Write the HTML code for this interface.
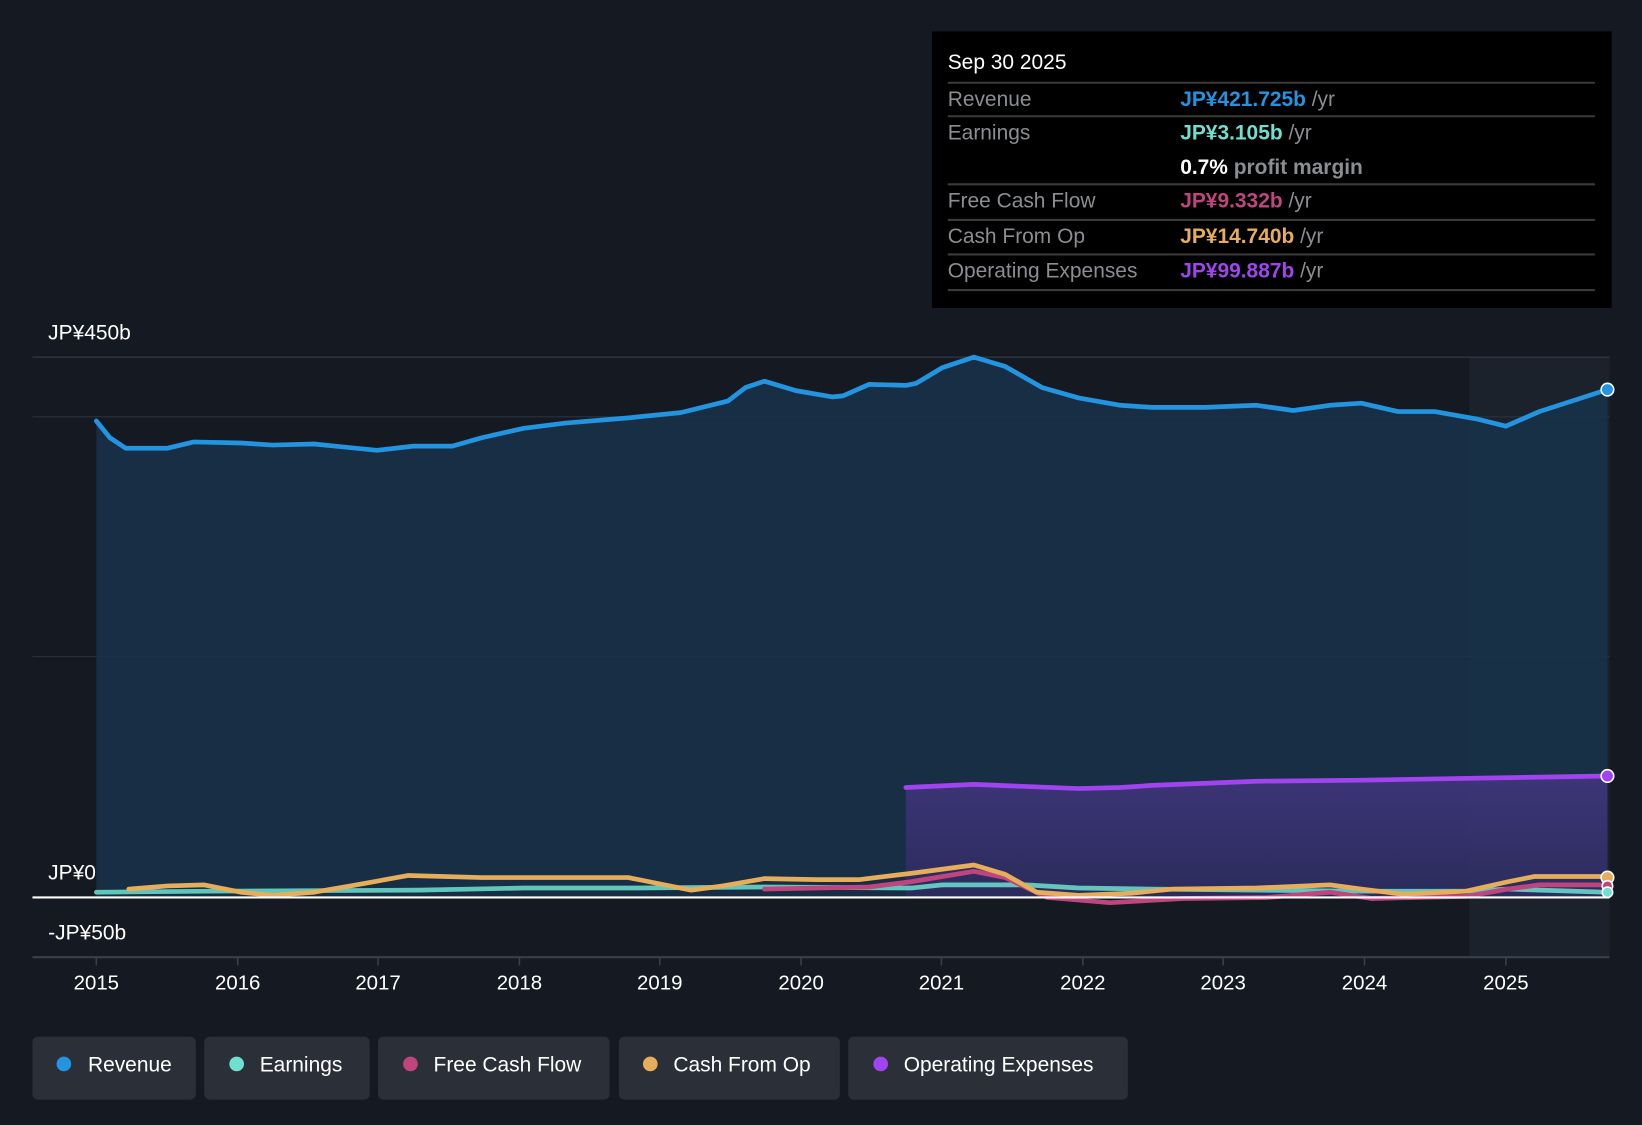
<!DOCTYPE html>
<html><head><meta charset="utf-8">
<style>
html,body{margin:0;padding:0;background:#151a22;}
body{width:1642px;height:1120px;overflow:hidden;font-family:"Liberation Sans",sans-serif;}
svg text{font-family:"Liberation Sans",sans-serif;}
</style></head><body>
<svg width="1642" height="1120" viewBox="0 0 1568 1069.5" xmlns="http://www.w3.org/2000/svg">
<defs>
<linearGradient id="op" x1="0" y1="0" x2="0" y2="1">
<stop offset="0" stop-color="#5b3aa0" stop-opacity="0.55"/>
<stop offset="1" stop-color="#3a2a70" stop-opacity="0.55"/>
</linearGradient>
</defs>
<rect width="1568" height="1070" fill="#151a22"/>
<rect x="31" y="341" width="1506" height="573" fill="#141922"/>
<rect x="1403" y="341" width="134" height="573" fill="#1b222c"/>
<line x1="31" y1="341" x2="1537" y2="341" stroke="#3a404a" stroke-width="1"/>
<line x1="31" y1="398" x2="1537" y2="398" stroke="#2a3240" stroke-width="1"/>
<line x1="31" y1="627" x2="1537" y2="627" stroke="#2a3240" stroke-width="1"/>
<path d="M92,402 L105,418 L120,428 L160,428 L185,422 L230,423 L260,425 L300,424 L330,427 L360,430 L395,426 L432,426 L460,418 L500,409 L540,404 L600,399 L650,394 L695,383 L712,370 L730,364 L760,373 L795,379 L805,378 L830,367 L865,368 L875,366 L900,351 L930,341 L960,350 L995,370 L1030,380 L1070,387 L1100,389 L1150,389 L1200,387 L1235,392 L1270,387 L1300,385 L1335,393 L1370,393 L1410,400 L1438,407 L1470,393 L1535,372 L1535,857 L92,857 Z" fill="#17324a" fill-opacity="0.85"/>
<path d="M865,752 L930,749 L1030,753 L1070,752 L1100,750 L1200,746 L1300,745 L1535,741 L1535,857 L865,857 Z" fill="url(#op)"/>
<g fill="none" stroke-width="4.5" stroke-linejoin="round" stroke-linecap="round">
<path d="M92,402 L105,418 L120,428 L160,428 L185,422 L230,423 L260,425 L300,424 L330,427 L360,430 L395,426 L432,426 L460,418 L500,409 L540,404 L600,399 L650,394 L695,383 L712,370 L730,364 L760,373 L795,379 L805,378 L830,367 L865,368 L875,366 L900,351 L930,341 L960,350 L995,370 L1030,380 L1070,387 L1100,389 L1150,389 L1200,387 L1235,392 L1270,387 L1300,385 L1335,393 L1370,393 L1410,400 L1438,407 L1470,393 L1535,372" stroke="#2394df"/>
<path d="M865,752 L930,749 L1030,753 L1070,752 L1100,750 L1200,746 L1300,745 L1535,741" stroke="#a044f0"/>
<path d="M92,852 L200,851 L400,850 L500,848 L600,848 L730,847 L870,848 L900,845 L980,845 L1030,848 L1100,849 L1200,850 L1300,851 L1400,851 L1440,849 L1535,852" stroke="#6fe0cf" stroke-opacity="0.85"/>
<path d="M730,849 L830,847 L870,842 L930,832 L960,838 L1000,857 L1060,862 L1130,858 L1210,857 L1270,852 L1310,858 L1400,856 L1440,849 L1470,845 L1535,845" stroke="#c0457f"/>
<path d="M123,849 L160,846 L195,845 L230,852 L260,855 L300,852 L340,845 L390,836 L460,838 L600,838 L620,842 L660,850 L690,846 L730,839 L780,840 L820,840 L870,834 L930,826 L960,835 L990,852 L1030,855 L1080,853 L1120,849 L1200,848 L1270,845 L1300,849 L1340,854 L1400,851 L1440,842 L1465,837 L1535,837" stroke="#e6ad5a"/>
</g>
<line x1="31" y1="857" x2="1537" y2="857" stroke="#ffffff" stroke-width="2"/>
<line x1="31" y1="914" x2="1537" y2="914" stroke="#3a404a" stroke-width="2"/>
<g stroke="#3a404a" stroke-width="1.5">
<line x1="92" y1="914" x2="92" y2="922"/><line x1="227" y1="914" x2="227" y2="922"/><line x1="361" y1="914" x2="361" y2="922"/><line x1="496" y1="914" x2="496" y2="922"/><line x1="630" y1="914" x2="630" y2="922"/><line x1="765" y1="914" x2="765" y2="922"/><line x1="899" y1="914" x2="899" y2="922"/><line x1="1034" y1="914" x2="1034" y2="922"/><line x1="1168" y1="914" x2="1168" y2="922"/><line x1="1303" y1="914" x2="1303" y2="922"/><line x1="1438" y1="914" x2="1438" y2="922"/>
</g>
<g fill="#ffffff" font-size="19.5" text-anchor="middle">
<text x="92" y="945">2015</text><text x="227" y="945">2016</text><text x="361" y="945">2017</text><text x="496" y="945">2018</text><text x="630" y="945">2019</text><text x="765" y="945">2020</text><text x="899" y="945">2021</text><text x="1034" y="945">2022</text><text x="1168" y="945">2023</text><text x="1303" y="945">2024</text><text x="1438" y="945">2025</text>
</g>
<g fill="#ffffff" font-size="20">
<text x="46" y="324">JP¥450b</text>
<text x="46" y="840">JP¥0</text>
<text x="46" y="897">-JP¥50b</text>
</g>
<circle cx="1535" cy="372" r="6" fill="#2394df" stroke="#fff" stroke-width="1.5"/>
<circle cx="1535" cy="741" r="6" fill="#a044f0" stroke="#fff" stroke-width="1.5"/>
<circle cx="1535" cy="838" r="6" fill="#e6ad5a" stroke="#fff" stroke-width="1.5"/>
<circle cx="1535" cy="846" r="5" fill="#c0457f" stroke="#fff" stroke-width="1.5"/>
<circle cx="1535" cy="852" r="5" fill="#6fe0cf" stroke="#fff" stroke-width="1.5"/>
<rect x="890" y="30" width="649" height="264" fill="#000000"/>
<g font-size="20">
<text x="905" y="66" fill="#fff">Sep 30 2025</text>
<line x1="905" y1="79" x2="1523" y2="79" stroke="#3a3a3a" stroke-width="2"/>
<text x="905" y="101" fill="#8a8d92">Revenue</text>
<text x="1127" y="101" fill="#2394df" font-weight="bold">JP¥421.725b <tspan fill="#8a8d92" font-weight="normal">/yr</tspan></text>
<line x1="905" y1="111" x2="1523" y2="111" stroke="#3a3a3a" stroke-width="2"/>
<text x="905" y="133" fill="#8a8d92">Earnings</text>
<text x="1127" y="133" fill="#6fe0cf" font-weight="bold">JP¥3.105b <tspan fill="#8a8d92" font-weight="normal">/yr</tspan></text>
<text x="1127" y="166" fill="#fff" font-weight="bold">0.7% <tspan fill="#8a8d92">profit margin</tspan></text>
<line x1="905" y1="176" x2="1523" y2="176" stroke="#3a3a3a" stroke-width="2"/>
<text x="905" y="198" fill="#8a8d92">Free Cash Flow</text>
<text x="1127" y="198" fill="#c0457f" font-weight="bold">JP¥9.332b <tspan fill="#8a8d92" font-weight="normal">/yr</tspan></text>
<line x1="905" y1="210" x2="1523" y2="210" stroke="#3a3a3a" stroke-width="2"/>
<text x="905" y="232" fill="#8a8d92">Cash From Op</text>
<text x="1127" y="232" fill="#e6ad5a" font-weight="bold">JP¥14.740b <tspan fill="#8a8d92" font-weight="normal">/yr</tspan></text>
<line x1="905" y1="243" x2="1523" y2="243" stroke="#3a3a3a" stroke-width="2"/>
<text x="905" y="265" fill="#8a8d92">Operating Expenses</text>
<text x="1127" y="265" fill="#a044f0" font-weight="bold">JP¥99.887b <tspan fill="#8a8d92" font-weight="normal">/yr</tspan></text>
<line x1="905" y1="277" x2="1523" y2="277" stroke="#3a3a3a" stroke-width="2"/>
</g>
<g font-size="20" fill="#fff">
<rect x="31" y="990" width="156" height="60" rx="5" fill="#2b3038"/>
<circle cx="61" cy="1016" r="7" fill="#2394df"/><text x="84" y="1023">Revenue</text>
<rect x="195" y="990" width="158" height="60" rx="5" fill="#2b3038"/>
<circle cx="226" cy="1016" r="7" fill="#6fe0cf"/><text x="248" y="1023">Earnings</text>
<rect x="361" y="990" width="221" height="60" rx="5" fill="#2b3038"/>
<circle cx="392" cy="1016" r="7" fill="#c0457f"/><text x="414" y="1023">Free Cash Flow</text>
<rect x="591" y="990" width="211" height="60" rx="5" fill="#2b3038"/>
<circle cx="621" cy="1016" r="7" fill="#e6ad5a"/><text x="643" y="1023">Cash From Op</text>
<rect x="810" y="990" width="267" height="60" rx="5" fill="#2b3038"/>
<circle cx="841" cy="1016" r="7" fill="#a044f0"/><text x="863" y="1023">Operating Expenses</text>
</g>
</svg>
</body></html>
